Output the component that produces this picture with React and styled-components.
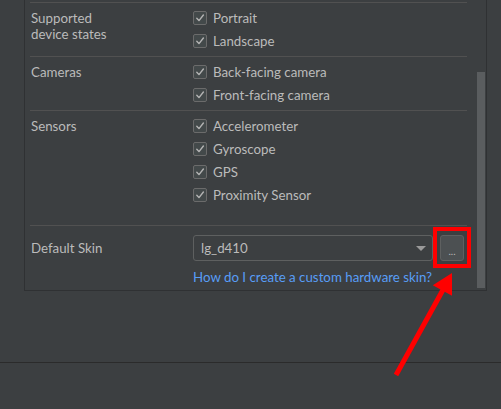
import React from "react";
import styled, { createGlobalStyle } from "styled-components";

const Global = createGlobalStyle`
  html, body { margin: 0; padding: 0; background: #3c3f41; }
  body { width: 501px; height: 409px; overflow: hidden; font-family: Lato, "Open Sans", sans-serif; font-size: 13.3px; color: #bbbbbb; }
`;

const Page = styled.div`
  position: relative;
  width: 501px;
  height: 409px;
  display: flex;
  flex-direction: column;
  background: #3c3f41;
`;

const Top = styled.div`
  height: 362px;
  display: flex;
  align-items: flex-start;
  padding-left: 24px;
`;

const Panel = styled.div`
  width: 461px;
  border-left: 1px solid #2f3133;
  border-right: 1px solid #2f3133;
  border-bottom: 1px solid #2f3133;
  display: flex;
`;

const Content = styled.div`
  flex: 1;
  padding: 2px 10px 0 5px;
`;

const ScrollTrack = styled.div`
  width: 8px;
  margin-right: 1px;
  display: flex;
  flex-direction: column;
`;

const Thumb = styled.div`
  margin-top: 72px;
  flex: 1;
  margin-bottom: 2px;
  background: #5a5d5f;
`;

const Section = styled.div`
  display: grid;
  grid-template-columns: 163px 1fr;
  border-top: 1px solid #515151;
  padding-top: ${(p) => p.$pt}px;
  padding-bottom: ${(p) => p.$pb}px;
`;

const Label = styled.div`
  line-height: 16px;
  padding-left: 1px;
  padding-top: ${(p) => p.$pt || 2}px;
`;

const Options = styled.div`
  display: flex;
  flex-direction: column;
  gap: 3px;
`;

const CheckRow = styled.label`
  height: 20px;
  display: flex;
  align-items: center;
  gap: 6px;
  line-height: 16px;
`;

const Box = styled.span`
  width: 12px;
  height: 12px;
  border: 1px solid #6b6b6b;
  border-radius: 2px;
  background: #43494a;
  display: flex;
  align-items: center;
  justify-content: center;
`;

const Check = () => (
  <Box>
    <svg width="10" height="10" viewBox="0 0 10 10">
      <path d="M1.8 5.2 L4 7.6 L8.4 2" fill="none" stroke="#b4b4b4" strokeWidth="1.4" strokeLinecap="round" strokeLinejoin="round" />
    </svg>
  </Box>
);

const SkinCol = styled.div`
  display: flex;
  flex-direction: column;
  gap: 8px;
`;

const SkinRow = styled.div`
  display: flex;
  align-items: center;
  gap: 7px;
`;

const Select = styled.div`
  height: 24px;
  border: 1px solid #5e6060;
  border-radius: 3px;
  background: #3c3f41;
  display: flex;
  align-items: center;
  padding: 0 6px 0 7px;
  box-sizing: content-box;
  width: 225px;
  justify-content: space-between;
`;

const Caret = styled.span`
  width: 0;
  height: 0;
  border-left: 5px solid transparent;
  border-right: 5px solid transparent;
  border-top: 5px solid #9a9a9a;
`;

const DotsButton = styled.button`
  width: 24px;
  height: 26px;
  border: 1px solid #5e6060;
  border-radius: 3px;
  background: #4c5052;
  color: #bbbbbb;
  font-family: inherit;
  font-size: 10px;
  padding: 0 0 4px;
  display: flex;
  align-items: flex-end;
  justify-content: center;
  line-height: 10px;
`;

const Link = styled.a`
  color: #589df6;
  line-height: 16px;
  text-decoration: none;
`;

const Divider = styled.div`
  height: 1px;
  background: #2b2b2b;
`;

const Footer = styled.div`
  flex: 1;
  background: #3c3f41;
`;

const Highlight = styled.div`
  position: absolute;
  left: 433px;
  top: 227px;
  width: 30px;
  height: 33px;
  border: 4px solid #ff0000;
`;

const Arrow = styled.svg`
  position: absolute;
  left: 0;
  top: 0;
  pointer-events: none;
`;

const sections = [
  { label: ["Supported", "device states"], items: ["Portrait", "Landscape"], pb: 5 },
  { label: ["Cameras"], items: ["Back-facing camera", "Front-facing camera"], pb: 5 },
  { label: ["Sensors"], items: ["Accelerometer", "Gyroscope", "GPS", "Proximity Sensor"], pb: 20 },
];

export default function App() {
  return (
    <>
      <Global />
      <Page>
        <Top>
          <Panel>
            <Content>
              {sections.map((s) => (
                <Section key={s.label[0]} $pt={5} $pb={s.pb}>
                  <Label>
                    {s.label.map((l) => (
                      <div key={l}>{l}</div>
                    ))}
                  </Label>
                  <Options>
                    {s.items.map((it) => (
                      <CheckRow key={it}>
                        <Check />
                        {it}
                      </CheckRow>
                    ))}
                  </Options>
                </Section>
              ))}
              <Section $pt={9} $pb={5}>
                <Label $pt={5}>Default Skin</Label>
                <SkinCol>
                  <SkinRow>
                    <Select>
                      <span>lg_d410</span>
                      <Caret />
                    </Select>
                    <DotsButton>...</DotsButton>
                  </SkinRow>
                  <Link href="#">How do I create a custom hardware skin?</Link>
                </SkinCol>
              </Section>
            </Content>
            <ScrollTrack>
              <Thumb />
            </ScrollTrack>
          </Panel>
        </Top>
        <Divider />
        <Footer />
        <Highlight />
        <Arrow width="501" height="409" viewBox="0 0 501 409">
          <line x1="396" y1="375" x2="444" y2="288" stroke="#ff0000" strokeWidth="5" />
          <polygon points="452,273 432.8,285.2 452,295.8" fill="#ff0000" />
        </Arrow>
      </Page>
    </>
  );
}
